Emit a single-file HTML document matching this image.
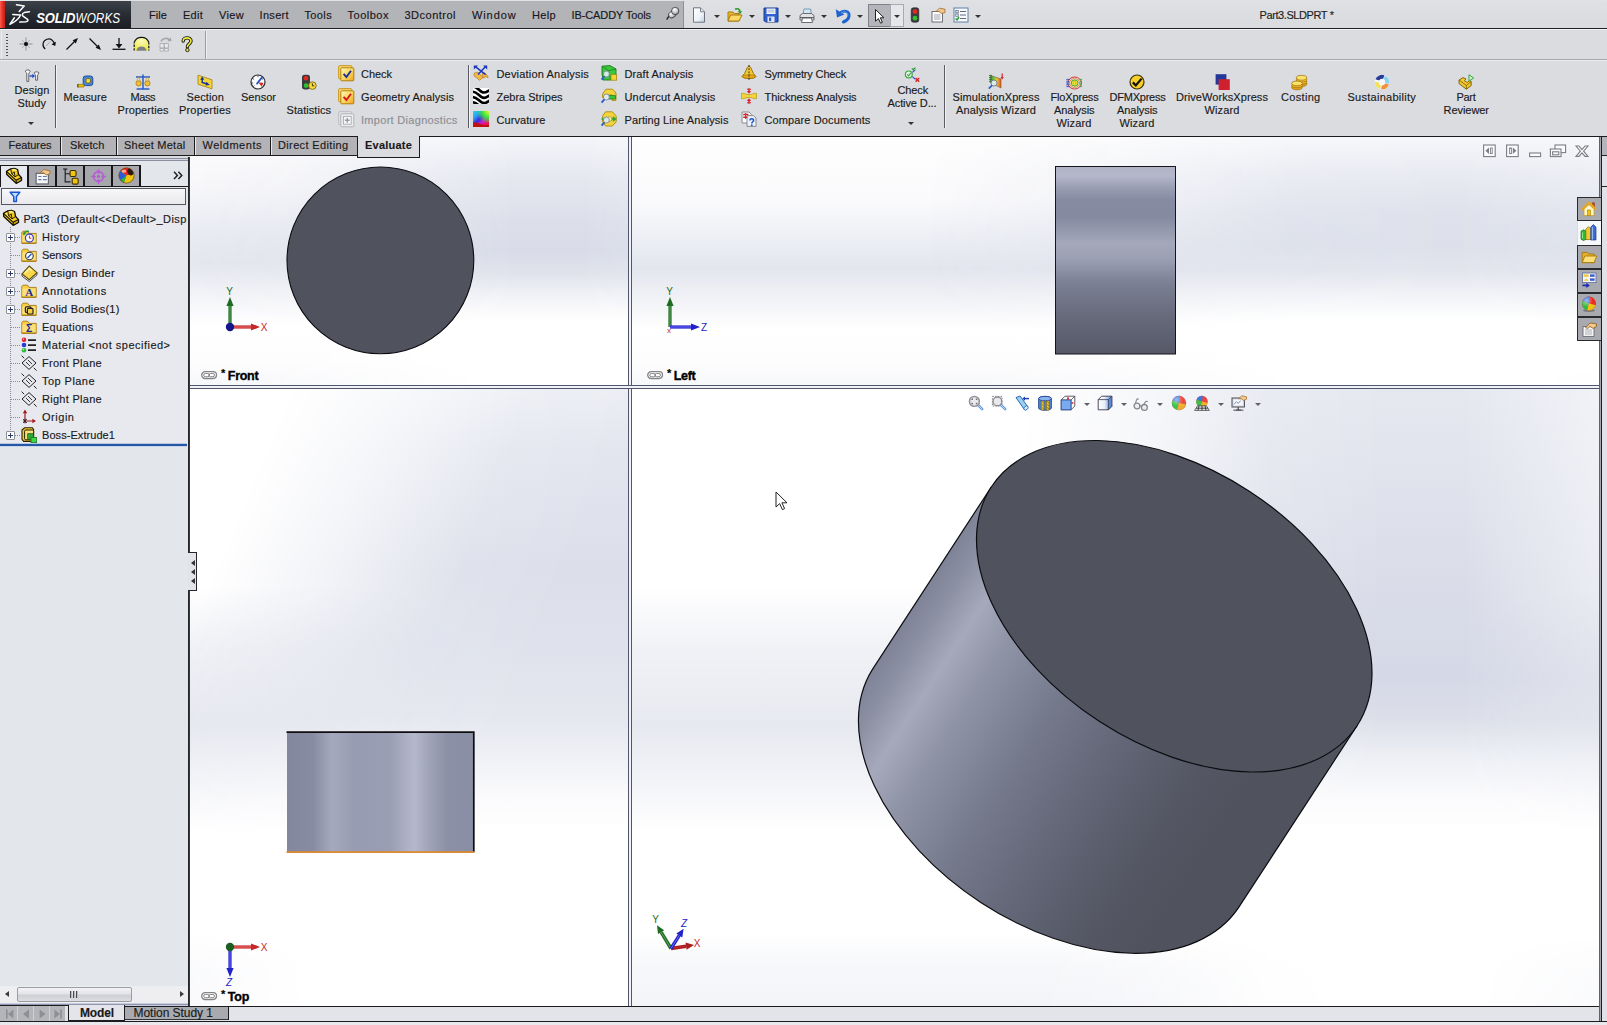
<!DOCTYPE html>
<html lang="en"><head><meta charset="utf-8"><title>Part3.SLDPRT - SolidWorks</title>
<style>
html,body{margin:0;padding:0;}
body{width:1607px;height:1025px;overflow:hidden;background:#dadcdf;font-family:"Liberation Sans",sans-serif;font-size:11px;color:#1a1a1a;}
#app{position:relative;width:1607px;height:1025px;overflow:hidden;}
#app div,#app span,#app svg{position:absolute;}
.t{white-space:pre;line-height:16px;height:16px;-webkit-text-stroke:.15px currentColor;}
svg{overflow:visible;}
.tsep{top:137px;width:1px;height:18px;background:#1c1c1e;box-shadow:1px 0 0 #e9e9ec;}
.fmt{top:166px;width:26px;height:20px;background:#a6a7ad;}
.tp{left:1577px;width:24px;height:24px;box-sizing:border-box;background:#a9aaaf;border:1px solid #2a2a2e;border-right:0;}
.tp.on{background:#f7f8fa;border-color:#f7f8fa;border-left-color:#d9dbe1;}
.harr{left:191px;width:0;height:0;border:3px solid transparent;border-right:4px solid #333;border-left:0;}

</style></head>
<body>
<div id="app">

<div id="gfx" style="left:190px;top:137px;width:1409px;height:869px;background:#fff"></div>
<!-- viewport backgrounds -->
<div id="vp1" style="left:190px;top:137px;width:438px;height:248px;background:linear-gradient(180deg,#fdfdfe 0%,#f7f7fa 20%,#e9ebf2 40%,#e5e7ef 51%,#f2f3f7 63%,#ffffff 76%,#fdfdfe 90%,#f7f8fa 100%)"></div>
<div style="left:190px;top:137px;width:438px;height:248px;background:linear-gradient(180deg,#f4f5f9 0%,#e6e8f0 16%,#dcdfea 34%,#d9dce8 46%,#e0e3ec 55%,#f1f2f6 64%,#ffffff 74%,#ffffff 100%);-webkit-mask-image:linear-gradient(90deg,rgba(0,0,0,0) 0%,rgba(0,0,0,.15) 22%,rgba(0,0,0,.7) 52%,#000 74%,#000 90%,rgba(0,0,0,.85) 100%);mask-image:linear-gradient(90deg,rgba(0,0,0,0) 0%,rgba(0,0,0,.15) 22%,rgba(0,0,0,.7) 52%,#000 74%,#000 90%,rgba(0,0,0,.85) 100%)"></div>
<div id="vp2" style="left:632px;top:137px;width:967px;height:248px;background:linear-gradient(180deg,#fefefe 0%,#fafafc 26%,#eceef4 42%,#e4e6ef 53%,#f1f2f6 65%,#ffffff 78%,#fdfdfe 90%,#f7f8fa 100%)"></div>
<div style="left:632px;top:137px;width:967px;height:248px;background:linear-gradient(180deg,#f6f7fa 0%,#e9ebf2 14%,#dfe2ec 30%,#dde0ea 44%,#e3e5ee 54%,#f2f3f7 64%,#ffffff 74%,#ffffff 100%);-webkit-mask-image:linear-gradient(90deg,rgba(0,0,0,0) 0%,rgba(0,0,0,0) 30%,rgba(0,0,0,.35) 50%,rgba(0,0,0,.9) 68%,#000 85%,rgba(0,0,0,.8) 100%);mask-image:linear-gradient(90deg,rgba(0,0,0,0) 0%,rgba(0,0,0,0) 30%,rgba(0,0,0,.35) 50%,rgba(0,0,0,.9) 68%,#000 85%,rgba(0,0,0,.8) 100%)"></div>
<div id="vp3" style="left:190px;top:389px;width:438px;height:617px;background:linear-gradient(180deg,#ffffff 0%,#ffffff 32%,#f1f2f6 42%,#e7e9f0 54.500%,#f2f3f7 63%,#ffffff 72%,#ffffff 88%,#f6f7fa 94%,#f3f4f8 100%)"></div>
<div style="left:190px;top:389px;width:438px;height:617px;background:linear-gradient(180deg,#eceef4 0%,#e3e6ef 10%,#dcdfea 29%,#dfe2ec 42%,#e5e7ef 53%,#f0f1f6 60%,#fbfbfd 66.500%,#ffffff 72%,#ffffff 100%);-webkit-mask-image:linear-gradient(112deg,rgba(0,0,0,0) 0%,rgba(0,0,0,0) 14%,rgba(0,0,0,.35) 30%,rgba(0,0,0,.9) 50%,#000 66%,#000 100%);mask-image:linear-gradient(112deg,rgba(0,0,0,0) 0%,rgba(0,0,0,0) 14%,rgba(0,0,0,.35) 30%,rgba(0,0,0,.9) 50%,#000 66%,#000 100%)"></div>
<div id="vp4" style="left:632px;top:389px;width:967px;height:617px;background:linear-gradient(180deg,#ffffff 0%,#ffffff 32%,#f1f2f6 42%,#e7e9f0 54.500%,#f2f3f7 63%,#ffffff 72%,#ffffff 88%,#f6f7fa 94%,#f3f4f8 100%)"></div>
<div style="left:632px;top:389px;width:967px;height:617px;background:linear-gradient(180deg,#e6e8f0 0%,#dfe2ec 18%,#d9dce8 34%,#d5d8e6 47%,#dcdfe9 53.500%,#eef0f5 60%,#fbfbfd 66.500%,#ffffff 72%,#ffffff 100%);-webkit-mask-image:linear-gradient(90deg,rgba(0,0,0,0) 0%,rgba(0,0,0,0) 40%,rgba(0,0,0,.35) 54%,rgba(0,0,0,.85) 66%,#000 78%,#000 86%,rgba(0,0,0,.55) 100%);mask-image:linear-gradient(90deg,rgba(0,0,0,0) 0%,rgba(0,0,0,0) 40%,rgba(0,0,0,.35) 54%,rgba(0,0,0,.85) 66%,#000 78%,#000 86%,rgba(0,0,0,.55) 100%)"></div>
<!-- splitters -->
<div style="left:628px;top:137px;width:4px;height:869px;background:linear-gradient(90deg,#50566c 0 25%,#f1f2f8 25% 75%,#50566c 75%)"></div>
<div style="left:190px;top:385px;width:1409px;height:4px;background:linear-gradient(180deg,#50566c 0 25%,#f1f2f8 25% 75%,#50566c 75%)"></div>
<div style="left:629px;top:386px;width:2px;height:2px;background:#f1f2f8"></div>

<svg id="model" width="1607" height="1025" viewBox="0 0 1607 1025" style="left:0;top:0">
<defs>
<linearGradient id="gIso" gradientUnits="userSpaceOnUse" x1="872.3" y1="669.7" x2="1238.2" y2="908.2">
<stop offset="0" stop-color="#7f8397"/><stop offset=".055" stop-color="#8c90a3"/><stop offset=".13" stop-color="#a5a9bb"/>
<stop offset=".22" stop-color="#9094a7"/><stop offset=".40" stop-color="#74788b"/><stop offset=".53" stop-color="#676a7b"/>
<stop offset=".645" stop-color="#5c5f6e"/><stop offset=".757" stop-color="#545663"/><stop offset=".87" stop-color="#50525e"/><stop offset="1" stop-color="#50525e"/>
</linearGradient>
<linearGradient id="gLeft" x1="0" y1="0" x2="0" y2="1">
<stop offset="0" stop-color="#aeb2c4"/><stop offset=".05" stop-color="#b4b8ca"/><stop offset=".11" stop-color="#9a9fb4"/><stop offset=".18" stop-color="#868ba2"/>
<stop offset=".27" stop-color="#848aa0"/><stop offset=".41" stop-color="#a4a8ba"/><stop offset=".50" stop-color="#9a9eb1"/><stop offset=".62" stop-color="#7c8094"/>
<stop offset=".80" stop-color="#666a7b"/><stop offset="1" stop-color="#565868"/>
</linearGradient>
<linearGradient id="gTop" x1="0" y1="0" x2="1" y2="0">
<stop offset="0" stop-color="#82879d"/><stop offset=".14" stop-color="#878ca2"/><stop offset=".24" stop-color="#a4a9be"/><stop offset=".36" stop-color="#979cb2"/>
<stop offset=".55" stop-color="#999eb4"/><stop offset=".68" stop-color="#b4b8ca"/><stop offset=".78" stop-color="#9a9fb4"/><stop offset=".86" stop-color="#8b90a6"/><stop offset="1" stop-color="#898ea4"/>
</linearGradient>
</defs>
<!-- front view -->
<circle cx="380.4" cy="260.4" r="93.4" fill="#50525e" stroke="#0c0c10" stroke-width="1.1"/>
<!-- left view -->
<rect x="1055.5" y="166.5" width="120" height="187.5" fill="url(#gLeft)" stroke="#15151a" stroke-width="1"/>
<!-- top view -->
<rect x="287" y="732" width="187" height="120" fill="url(#gTop)"/>
<path d="M286.500 732.200H473.800V852" fill="none" stroke="#0e0e12" stroke-width="1.700"/>
<path d="M286.500 852.200H474.500" fill="none" stroke="#e08a30" stroke-width="1.800"/>
<!-- iso view -->
<path d="M991.3 487.0 L872.3 669.7 A218.4 137.4 33.1 0 0 1238.2 908.2 L1357.2 725.5 Z" fill="url(#gIso)" stroke="#0c0c10" stroke-width="1.2" stroke-linejoin="round"/>
<ellipse cx="1174.25" cy="606.25" rx="218.4" ry="137.4" transform="rotate(33.1 1174.25 606.25)" fill="#50525e" stroke="#0c0c10" stroke-width="1.2"/>
</svg>
<svg id="triads" width="1607" height="1025" viewBox="0 0 1607 1025" style="left:0;top:0"><line x1="230.0" y1="327.0" x2="230.0" y2="306.0" stroke="#1f6b22" stroke-width="3.2"/><line x1="230.0" y1="327.0" x2="230.0" y2="306.0" stroke="#5aa85c" stroke-width="1"/><polygon points="230.0,297.0 233.6,306.0 226.4,306.0" fill="#1f6b22"/><line x1="230.0" y1="327.0" x2="251.0" y2="327.0" stroke="#c62828" stroke-width="3.2"/><line x1="230.0" y1="327.0" x2="251.0" y2="327.0" stroke="#ef7070" stroke-width="1"/><polygon points="260.0,327.0 251.0,330.6 251.0,323.4" fill="#c62828"/><circle cx="230" cy="327" r="4.2" fill="#15158c"/><text x="229.5" y="294.5" fill="#1f6b22" font-size="10" text-anchor="middle" font-family="Liberation Sans,sans-serif">Y</text><text x="264.0" y="330.5" fill="#c62828" font-size="10" text-anchor="middle" font-family="Liberation Sans,sans-serif">X</text><text x="669.0" y="332.5" fill="#c62828" font-size="8" text-anchor="middle" font-family="Liberation Sans,sans-serif">x</text><line x1="670.0" y1="327.0" x2="670.0" y2="306.0" stroke="#1f6b22" stroke-width="3.2"/><line x1="670.0" y1="327.0" x2="670.0" y2="306.0" stroke="#5aa85c" stroke-width="1"/><polygon points="670.0,297.0 673.6,306.0 666.4,306.0" fill="#1f6b22"/><line x1="670.0" y1="327.0" x2="691.0" y2="327.0" stroke="#2222c8" stroke-width="3.2"/><line x1="670.0" y1="327.0" x2="691.0" y2="327.0" stroke="#6a6aff" stroke-width="1"/><polygon points="700.0,327.0 691.0,330.6 691.0,323.4" fill="#2222c8"/><text x="669.5" y="294.5" fill="#1f6b22" font-size="10" text-anchor="middle" font-family="Liberation Sans,sans-serif">Y</text><text x="704.0" y="330.5" fill="#2222c8" font-size="10" text-anchor="middle" font-family="Liberation Sans,sans-serif">Z</text><line x1="230.0" y1="947.0" x2="251.0" y2="947.0" stroke="#c62828" stroke-width="3.2"/><line x1="230.0" y1="947.0" x2="251.0" y2="947.0" stroke="#ef7070" stroke-width="1"/><polygon points="260.0,947.0 251.0,950.6 251.0,943.4" fill="#c62828"/><line x1="230.0" y1="947.0" x2="230.0" y2="968.0" stroke="#2222c8" stroke-width="3.2"/><line x1="230.0" y1="947.0" x2="230.0" y2="968.0" stroke="#6a6aff" stroke-width="1"/><polygon points="230.0,977.0 226.4,968.0 233.6,968.0" fill="#2222c8"/><circle cx="230" cy="947" r="4.2" fill="#1c5e1f"/><text x="264.0" y="950.5" fill="#c62828" font-size="10" text-anchor="middle" font-family="Liberation Sans,sans-serif">X</text><text font-style="italic" x="229.0" y="985.5" fill="#2222c8" font-size="10" text-anchor="middle" font-family="Liberation Sans,sans-serif">Z</text><line x1="671.0" y1="948.5" x2="686.1" y2="946.2" stroke="#a81f1f" stroke-width="3.4"/><line x1="671.0" y1="948.5" x2="686.1" y2="946.2" stroke="#c62828" stroke-width="1"/><polygon points="694.0,945.0 686.6,949.8 685.5,942.6" fill="#a81f1f"/><line x1="671.0" y1="948.5" x2="661.1" y2="932.1" stroke="#1f6b22" stroke-width="3.4"/><line x1="671.0" y1="948.5" x2="661.1" y2="932.1" stroke="#5aa85c" stroke-width="1"/><polygon points="657.0,925.2 664.2,930.2 658.0,933.9" fill="#1f6b22"/><line x1="671.0" y1="948.5" x2="679.3" y2="935.4" stroke="#2222c8" stroke-width="3.4"/><line x1="671.0" y1="948.5" x2="679.3" y2="935.4" stroke="#6a6aff" stroke-width="1"/><polygon points="683.6,928.7 682.3,937.4 676.3,933.5" fill="#2222c8"/><text x="655.5" y="922.5" fill="#1f6b22" font-size="10" text-anchor="middle" font-family="Liberation Sans,sans-serif">Y</text><text font-style="italic" x="684.0" y="926.5" fill="#2222c8" font-size="10" text-anchor="middle" font-family="Liberation Sans,sans-serif">Z</text><text x="697.0" y="947.0" fill="#c62828" font-size="10" text-anchor="middle" font-family="Liberation Sans,sans-serif">X</text></svg><svg width="17" height="9" viewBox="0 0 17 9" style="left:200.7px;top:370.7px"><rect x=".7" y=".7" width="14.800" height="6.800" rx="3.400" fill="#fff" stroke="#858585" stroke-width="1.300"/><rect x="2.700" y="2.500" width="5.600" height="3.200" rx="1.600" fill="none" stroke="#777" stroke-width=".9"/><rect x="7.900" y="2.500" width="5.600" height="3.200" rx="1.600" fill="none" stroke="#777" stroke-width=".9"/></svg><svg width="17" height="9" viewBox="0 0 17 9" style="left:646.7px;top:370.7px"><rect x=".7" y=".7" width="14.800" height="6.800" rx="3.400" fill="#fff" stroke="#858585" stroke-width="1.300"/><rect x="2.700" y="2.500" width="5.600" height="3.200" rx="1.600" fill="none" stroke="#777" stroke-width=".9"/><rect x="7.900" y="2.500" width="5.600" height="3.200" rx="1.600" fill="none" stroke="#777" stroke-width=".9"/></svg><svg width="17" height="9" viewBox="0 0 17 9" style="left:200.7px;top:991.7px"><rect x=".7" y=".7" width="14.800" height="6.800" rx="3.400" fill="#fff" stroke="#858585" stroke-width="1.300"/><rect x="2.700" y="2.500" width="5.600" height="3.200" rx="1.600" fill="none" stroke="#777" stroke-width=".9"/><rect x="7.900" y="2.500" width="5.600" height="3.200" rx="1.600" fill="none" stroke="#777" stroke-width=".9"/></svg><svg width="14" height="20" viewBox="0 0 14 20" style="left:775px;top:491px"><path d="M1 1V16L4.6 12.6L7.4 18.6L9.6 17.6L6.9 11.8H12Z" fill="#fff" stroke="#222" stroke-width="1"/></svg>
<!-- ===== title / menu bar ===== -->
<div style="left:0;top:0;width:1607px;height:1px;background:#e2e2e5"></div>
<div style="left:131px;top:1px;width:553px;height:27px;background:#b3b4b7"></div>
<div style="left:0;top:1px;width:131px;height:27px;background:linear-gradient(#3d424a,#2a2e35 45%,#1b1e24)"></div>
<div style="left:0;top:1px;width:5px;height:27px;background:linear-gradient(90deg,#f9604f,#e2281f 60%,#c8221a)"></div>
<div style="left:683px;top:1px;width:1px;height:27px;background:#8f9094"></div>
<div style="left:684px;top:1px;width:923px;height:27px;background:linear-gradient(#dee0e3,#d9dbde)"></div>
<div style="left:0;top:28px;width:1607px;height:1px;background:#202022"></div>
<div style="left:0;top:29px;width:1607px;height:1px;background:#f2f2f5"></div>
<!-- ===== small toolbar row ===== -->
<div style="left:206px;top:31px;width:1px;height:28px;background:#f0f0f2"></div>
<div style="left:205px;top:31px;width:1px;height:28px;background:#9a9ca2"></div>
<div style="left:1px;top:31px;width:1px;height:28px;background:#eceded"></div>
<div style="left:0;top:59px;width:1607px;height:1px;background:#a6a8ad"></div>
<div style="left:0;top:60px;width:1607px;height:1px;background:#eceded"></div>
<!-- ribbon separators -->
<div style="left:55px;top:65px;width:1px;height:63px;background:#5a5b60"></div>
<div style="left:56px;top:65px;width:1px;height:63px;background:#f2f2f5"></div>
<div style="left:468px;top:65px;width:1px;height:63px;background:#5a5b60"></div>
<div style="left:469px;top:65px;width:1px;height:63px;background:#f2f2f5"></div>
<div style="left:944px;top:65px;width:1px;height:63px;background:#5a5b60"></div>
<div style="left:945px;top:65px;width:1px;height:63px;background:#f2f2f5"></div>
<div style="left:0;top:136px;width:1607px;height:1px;background:#1c1c1e"></div>
<!-- ===== command manager tabs ===== -->
<div id="cmtabs" style="left:0;top:137px;width:357px;height:18px;background:#b2b2b7"></div>
<div style="left:0;top:155px;width:357px;height:1px;background:#1c1c1e"></div>
<div class="tsep" style="left:60px"></div><div class="tsep" style="left:116px"></div><div class="tsep" style="left:194px"></div><div class="tsep" style="left:270px"></div>
<div style="left:357px;top:136px;width:63px;height:22px;background:#dadcdf;border:1px solid #1c1c1e;border-top:0;box-sizing:border-box"></div>
<!-- ===== left panel ===== -->
<div style="left:0;top:156px;width:188px;height:850px;background:#e3e6eb"></div>
<div style="left:0;top:206px;width:188px;height:238px;background:#e7e9ef"></div>
<div style="left:0;top:156px;width:188px;height:2px;background:#dadcdf"></div>
<div style="left:0;top:158px;width:188px;height:1px;background:#8a8ea0"></div>
<div style="left:0;top:159px;width:188px;height:1px;background:#d6d9e2"></div>
<div style="left:0;top:160px;width:188px;height:1px;background:#8a8ea0"></div>
<div style="left:188px;top:157px;width:2px;height:849px;background:linear-gradient(90deg,#26272b 70%,#8a8c92)"></div>
<!-- fm tabs -->
<div style="left:0;top:165px;width:141px;height:22px;background:#17171a"></div>
<div style="left:29px;top:186px;width:159px;height:1px;background:#17171a"></div>
<div style="left:1px;top:166px;width:26px;height:21px;background:#e7e9ef"></div>
<div class="fmt" style="left:29px"></div><div class="fmt" style="left:57px"></div><div class="fmt" style="left:85px"></div><div class="fmt" style="left:113px"></div>
<!-- filter box -->
<div style="left:1px;top:188px;width:185px;height:17px;background:linear-gradient(#f7f7f9,#e9e9ed);border:1px solid #55575e;box-sizing:border-box"></div>
<!-- selection rollback bar -->
<div style="left:0;top:444px;width:187px;height:2px;background:#2458a4;box-shadow:0 -1px 0 #b9c8e4,0 1px 0 #c9d4ea"></div>
<!-- scrollbar -->
<div style="left:0;top:986px;width:188px;height:17px;background:#eeeef1"></div>
<div style="left:17px;top:987px;width:115px;height:15px;box-sizing:border-box;border:1px solid #9b9da3;border-radius:2px;background:linear-gradient(#f4f4f6,#e3e4e8 45%,#cfd0d5 55%,#dcdde1)"></div>
<div style="left:70px;top:991px;width:1px;height:7px;background:#4a4a4e;box-shadow:3px 0 0 #4a4a4e,6px 0 0 #4a4a4e,1px 0 0 #b9babf,4px 0 0 #b9babf,7px 0 0 #b9babf"></div>
<div style="left:5px;top:991px;width:0;height:0;border:3px solid transparent;border-right:4px solid #3a3a3e;border-left:0"></div>
<div style="left:180px;top:991px;width:0;height:0;border:3px solid transparent;border-left:4px solid #3a3a3e;border-right:0"></div>
<div style="left:0;top:1003px;width:188px;height:1px;background:#c9cddc"></div>
<div style="left:0;top:1004px;width:188px;height:1px;background:#8f94b2"></div>
<div style="left:0;top:1005px;width:188px;height:1px;background:#c9cddc"></div>
<!-- ===== bottom tab strip ===== -->
<div style="left:0;top:1006px;width:1599px;height:1px;background:#1c1c1e"></div>
<div style="left:0;top:1007px;width:1599px;height:14px;background:#e2e4ea"></div>
<div style="left:0;top:1021px;width:1607px;height:1px;background:#1c1c1e"></div>
<div style="left:0;top:1022px;width:1607px;height:3px;background:#e9e9ed"></div>
<div style="left:0;top:1005px;width:69px;height:1px;background:#1c1c1e"></div>
<div style="left:0;top:1006px;width:68px;height:15px;background:#b4b5b9"></div>
<div style="left:65px;top:1006px;width:3px;height:15px;background:#e2e3e6"></div>
<div style="left:68px;top:1005px;width:57px;height:17px;background:#1c1c1e"></div>
<div style="left:69px;top:1005px;width:55px;height:15px;background:#e3e5ea"></div>
<div style="left:125px;top:1007px;width:103px;height:12px;background:#a9aaaf"></div>
<div style="left:125px;top:1019px;width:104px;height:1px;background:#333336"></div>
<div style="left:228px;top:1006px;width:1px;height:14px;background:#1c1c1e"></div>
<!-- ===== right edge ===== -->
<div style="left:1599px;top:137px;width:1px;height:884px;background:#5c6272"></div>
<div style="left:1600px;top:137px;width:1px;height:884px;background:#a3a6ae"></div>
<div style="left:1601px;top:137px;width:1px;height:885px;background:#1c1c1e"></div>
<div style="left:1602px;top:137px;width:5px;height:884px;background:#e1e2e7"></div>
<div style="left:1602px;top:137px;width:5px;height:18px;background:#b4b5ba"></div>
<div style="left:1602px;top:155px;width:5px;height:1px;background:#222"></div>
<div style="left:1602px;top:186px;width:5px;height:1px;background:#222"></div>
<!-- task pane tabs -->
<div class="tp" style="top:197px"></div>
<div class="tp on" style="top:221px"></div>
<div class="tp" style="top:245px"></div>
<div class="tp" style="top:269px"></div>
<div class="tp" style="top:293px"></div>
<div class="tp" style="top:317px"></div>
<!-- panel collapse handle -->
<div style="left:188px;top:552px;width:9px;height:39px;box-sizing:border-box;background:#e3e4e9;border:1px solid #26272b;border-left:0"></div>
<div class="harr" style="top:560px"></div><div class="harr" style="top:569px"></div><div class="harr" style="top:578px"></div>

<svg width="126" height="27" viewBox="0 0 126 27" style="left:5px;top:1px">
<g fill="none" stroke="#fff" stroke-width="1.500" stroke-linecap="round" stroke-linejoin="round">
<path d="M11.500 3.800L19.200 4.900L14.200 10.400"/>
<path d="M7.800 13.500L15.600 13.900C14.600 17.400 9.200 21.600 4.900 23.200L9.400 16.800"/>
<path d="M24.400 10.700L19.200 11.600C16.800 12.400 17.200 14.600 18 15.200L22.600 18.300C23.600 19.300 22.600 20.500 21 20.700L14.800 21.100"/>
</g>
<text x="31.3" y="21.8" fill="#fff" font-family="Liberation Sans,sans-serif" font-size="15.5" font-style="italic" font-weight="bold" letter-spacing="-.2" textLength="39" lengthAdjust="spacingAndGlyphs">SOLID</text>
<text x="70.6" y="21.8" fill="#fff" font-family="Liberation Sans,sans-serif" font-size="15.5" font-style="italic" textLength="44.5" lengthAdjust="spacingAndGlyphs">WORKS</text>
</svg>
<svg width="16" height="16" viewBox="0 0 16 16" style="left:664.5px;top:6px"><defs><radialGradient id="gpin" cx=".4" cy=".3" r=".8"><stop offset="0" stop-color="#fff"/><stop offset=".55" stop-color="#c9c9cd"/><stop offset="1" stop-color="#6a6b70"/></radialGradient></defs><path d="M5 8.400L2 13.200" stroke="#2c2c30" stroke-width="1.500" stroke-linecap="round"/><ellipse cx="7.200" cy="8.600" rx="3.800" ry="3.200" fill="url(#gpin)" stroke="#3a3b40" stroke-width=".8" transform="rotate(-30 7.200 8.600)"/><circle cx="10.200" cy="5" r="3.700" fill="url(#gpin)" stroke="#3a3b40" stroke-width=".8"/></svg>
<svg width="16" height="16" viewBox="0 0 16 16" style="left:691px;top:7px"><defs><linearGradient id="gnew" x1="0" y1="0" x2="1" y2="1"><stop offset="0" stop-color="#fff"/><stop offset=".6" stop-color="#eef3f8"/><stop offset="1" stop-color="#bcd0e2"/></linearGradient></defs><path d="M2.5 .8H9.5L13.5 4.8V15.2H2.5Z" fill="url(#gnew)" stroke="#6d7480"/><path d="M9.5 .8V4.8H13.5" fill="#dfe3ea" stroke="#7d8088"/></svg>
<div style="left:713.5px;top:14.5px;width:0;height:0;border:3px solid transparent;border-top:3px solid #333;border-bottom:0"></div>
<svg width="16" height="16" viewBox="0 0 16 16" style="left:727px;top:7px"><path d="M1 5H6L7.5 6.5H12V14H1Z" fill="#e9b630" stroke="#a87a10"/><path d="M1 14L3.6 8H15L12 14Z" fill="#fbd964" stroke="#a87a10"/><path d="M8 2.2C10.5 1 12.8 2 13 4.6" fill="none" stroke="#2c9a2c" stroke-width="1.6"/><path d="M10.8 4.2H15.2L13 7.2Z" fill="#2c9a2c"/></svg>
<div style="left:749px;top:14.5px;width:0;height:0;border:3px solid transparent;border-top:3px solid #333;border-bottom:0"></div>
<svg width="16" height="16" viewBox="0 0 16 16" style="left:763px;top:7px"><path d="M1 1H15V15H2.5L1 13.5Z" fill="#2f5fd0" stroke="#1a3a8c"/><rect x="3.5" y="1.5" width="9" height="5.5" fill="#f4f6fb"/><rect x="4.5" y="9.5" width="7" height="5.5" fill="#dfe4ee"/><rect x="6" y="10.5" width="2.2" height="3.6" fill="#2f5fd0"/><path d="M4.5 3.2H11.5M4.5 5H11.5" stroke="#9aa6c4" stroke-width=".8"/></svg>
<div style="left:785px;top:14.5px;width:0;height:0;border:3px solid transparent;border-top:3px solid #333;border-bottom:0"></div>
<svg width="16" height="16" viewBox="0 0 16 16" style="left:798.5px;top:7.5px"><path d="M5 1H11.5L12.5 6.5H4Z" fill="#cfe6f7" stroke="#7d98b0"/><path d="M1 7.5L3.5 5.5H12.5L15 7.5V12H1Z" fill="#e2e3e7" stroke="#6a6c72"/><path d="M3.5 10H12.5L13.5 14.5H2.5Z" fill="#fdfdfd" stroke="#6a6c72"/><path d="M1 9.6H15" stroke="#55575c"/></svg>
<div style="left:821px;top:14.5px;width:0;height:0;border:3px solid transparent;border-top:3px solid #333;border-bottom:0"></div>
<svg width="16" height="16" viewBox="0 0 16 16" style="left:835px;top:7px"><path d="M4.600 6.800C8.200 2.400 14.600 4 14 9C13.600 12.200 11 14 8.400 15" fill="none" stroke="#1f63cf" stroke-width="3" stroke-linecap="round"/><path d="M.8 2.200L2 10.600L9.400 7.600Z" fill="#1f63cf"/><path d="M6 6.200C9 3.600 13 4.800 12.800 8.600" fill="none" stroke="#6fa4ef" stroke-width="1"/></svg>
<div style="left:857px;top:14.5px;width:0;height:0;border:3px solid transparent;border-top:3px solid #333;border-bottom:0"></div>
<div style="left:868px;top:4px;width:23px;height:23px;box-sizing:border-box;background:#b4b5ba;border:1px solid #808186"></div>
<div style="left:890px;top:4px;width:14px;height:23px;box-sizing:border-box;background:#e6e7eb;border:1px solid #a9aaaf"></div>
<svg width="16" height="16" viewBox="0 0 16 16" style="left:871px;top:7.5px"><path d="M4.5 1.5V13.2L7.4 10.6L9.6 15.2L11.4 14.3L9.3 9.8H13Z" fill="#fff" stroke="#222" stroke-width="1"/></svg>
<div style="left:894px;top:14.5px;width:0;height:0;border:3px solid transparent;border-top:3px solid #333;border-bottom:0"></div>
<svg width="16" height="16" viewBox="0 0 16 16" style="left:906.5px;top:7px"><rect x="4.2" y=".8" width="7.6" height="14.4" rx="2.2" fill="#3a3b3f" stroke="#222" stroke-width=".6"/><circle cx="8" cy="4.6" r="2.4" fill="#e8281e"/><circle cx="8" cy="11.2" r="2.4" fill="#2fbf2f"/></svg>
<svg width="16" height="16" viewBox="0 0 16 16" style="left:930px;top:7px"><rect x="2" y="4.5" width="10.5" height="10.5" fill="#fbfbfc" stroke="#6d6f76"/><path d="M4 8H10.5M4 10H10.5M4 12H10.5" stroke="#9b9da4" stroke-width=".9"/><path d="M6 4.5L9.5 1.2L15 2.2V5.5L11.5 6.5L9 4.5Z" fill="#f2c58c" stroke="#9a6a2c" stroke-width=".8"/></svg>
<svg width="16" height="16" viewBox="0 0 16 16" style="left:952.5px;top:7px"><rect x="1" y="1" width="14" height="14" fill="#f7f9fc" stroke="#5f7fa8"/><path d="M7 4.5H13M7 8H13M7 11.5H13" stroke="#5f6b80" stroke-width="1"/><rect x="2.8" y="3.4" width="2.4" height="2.4" fill="none" stroke="#5f6b80" stroke-width=".8"/><rect x="2.8" y="6.9" width="2.4" height="2.4" fill="none" stroke="#5f6b80" stroke-width=".8"/><path d="M2.6 11.4L4 12.9L6 10" fill="none" stroke="#1f9a2a" stroke-width="1.4"/></svg>
<div style="left:975px;top:14.5px;width:0;height:0;border:3px solid transparent;border-top:3px solid #333;border-bottom:0"></div>
<div style="left:6px;top:34px;width:2px;height:23px;background:repeating-linear-gradient(180deg,#4c4d52 0 1px,rgba(0,0,0,0) 1px 3px)"></div>
<svg width="16" height="16" viewBox="0 0 16 16" style="left:17.5px;top:35.5px"><path d="M8 1.500V14.500M1.500 8H14.500" stroke="#8a8b91" stroke-width=".9"/><path d="M4 4L12 12M12 4L4 12" stroke="#a5a6ab" stroke-width=".8"/><circle cx="8" cy="8" r="2" fill="#0c0c0e"/></svg>
<svg width="16" height="16" viewBox="0 0 16 16" style="left:40.5px;top:35.5px"><path d="M4.2 13C.6 10 1.6 4.6 6 3.2C9.8 2 12.8 4.6 13.6 8.6" fill="none" stroke="#111" stroke-width="1.2"/><path d="M10.4 8.2L14.2 10L15 5.8Z" fill="#111"/><path d="M5 10L9.6 5.2" stroke="#9a9ba0" stroke-width=".8"/></svg>
<svg width="16" height="16" viewBox="0 0 16 16" style="left:63.5px;top:35.5px"><path d="M2.5 13.5L12 4" stroke="#111" stroke-width="1.3"/><path d="M14 2L8.6 4.2L11.8 7.4Z" fill="#111"/></svg>
<svg width="16" height="16" viewBox="0 0 16 16" style="left:87px;top:35.5px"><path d="M2.5 2.5L12 12" stroke="#111" stroke-width="1.3"/><path d="M14 14L8.6 11.8L11.8 8.6Z" fill="#111"/></svg>
<svg width="16" height="16" viewBox="0 0 16 16" style="left:110.5px;top:35.5px"><path d="M8 2V10" stroke="#111" stroke-width="1.3"/><path d="M4.6 8L8 12.6L11.4 8Z" fill="#111"/><path d="M1.5 13.3H14.5" stroke="#111" stroke-width="1.3"/></svg>
<svg width="17" height="16" viewBox="0 0 17 16" style="left:132.5px;top:36px"><defs><radialGradient id="gdm" cx=".5" cy=".25" r=".7"><stop offset="0" stop-color="#fbfbc0"/><stop offset="1" stop-color="#eeea48"/></radialGradient></defs><path d="M1.200 14.600V6.200C2.400 3.400 5.600 1.400 8.500 1.400S14.600 3.400 15.800 6.200V14.600Z" fill="url(#gdm)"/><path d="M1.200 14.600V6.200M15.800 6.200V14.600" fill="none" stroke="#111" stroke-width="1.200" stroke-dasharray="2.400 1.200"/><path d="M1.200 6.200C2.400 3.400 5.600 1.400 8.500 1.400S14.600 3.400 15.800 6.200" fill="none" stroke="#111" stroke-width="1.200"/><path d="M3.400 14.800C3.800 9 13.200 9 13.600 14.800Z" fill="#7e8086"/></svg>
<svg width="16" height="16" viewBox="0 0 16 16" style="left:156.5px;top:35.5px"><path d="M3 7.5H7V12H3ZM7.4 7.5H11.4V12H7.4ZM3 12.4H7V15H3ZM7.4 12.4H11.4V15H7.4Z" fill="#e9eaed" stroke="#a5a6ab" stroke-width=".8"/><path d="M4 5.4C5.4 2 10.4 1.4 12.6 4" fill="none" stroke="#a5a6ab" stroke-width="1.6"/><path d="M10.4 5.4L14.6 5L13.6 1.2Z" fill="#a5a6ab"/></svg>
<svg width="16" height="16" viewBox="0 0 16 16" style="left:179px;top:35.5px"><path d="M4.2 5C4.2 .8 12 .8 12 5C12 7.8 8.6 7.8 8.4 10.6" fill="none" stroke="#111" stroke-width="3.4" stroke-linecap="round"/><path d="M4.2 5C4.2 .8 12 .8 12 5C12 7.8 8.6 7.8 8.4 10.6" fill="none" stroke="#f4f03a" stroke-width="1.6" stroke-linecap="round"/><circle cx="8.4" cy="14" r="1.7" fill="#f4f03a" stroke="#111" stroke-width=".9"/></svg>
<svg width="17" height="14" viewBox="0 0 17 14" style="left:23.5px;top:68.5px"><g fill="#f2f3f6" stroke="#55575e" stroke-width=".9"><path d="M1.4 2.2C1.4 .4 6.2 .4 6.2 2.2C6.2 3.6 4.8 3.6 4.8 4.6V12.4H2.8V4.6C2.8 3.6 1.4 3.6 1.4 2.2Z"/><path d="M10 4C10 2.4 15 2.4 15 4C15 5.2 13.6 5.2 13.6 6.2V11.2H11.6V6.2C11.600 5.200 10 5.200 10 4Z"/></g><path d="M5.6 7H9.4" stroke="#1a49c8" stroke-width="1.4"/><path d="M8.4 4.8L11 7L8.400 9.200Z" fill="#1a49c8"/></svg>
<div style="left:28px;top:121.5px;width:0;height:0;border:3px solid transparent;border-top:3px solid #333;border-bottom:0"></div>
<svg width="17" height="13" viewBox="0 0 17 13" style="left:76.5px;top:75px"><rect x="6.200" y="1" width="9.6" height="9.6" rx="2.4" fill="#4a86d8" stroke="#1f4a98"/><rect x="9" y="3.600" width="4.4" height="4.4" rx="1" fill="#f1dc4a" stroke="#6a5a10" stroke-width=".8"/><path d="M.8 9.4H7V12H.8Z" fill="#f1c40f" stroke="#8a6a00" stroke-width=".7"/><path d="M.8 9V12.600" stroke="#6a5a10" stroke-width="1.2"/></svg>
<svg width="16" height="16" viewBox="0 0 16 16" style="left:134.7px;top:74px"><path d="M8 .6V14.6M1 3H15M1.6 15H14.400" stroke="#2a5cc8" stroke-width="1.5"/><circle cx="3.600" cy="9.400" r="2.600" fill="#f1c232" stroke="#a87a10" stroke-width=".8"/><circle cx="12.400" cy="9.400" r="2.600" fill="#f1c232" stroke="#a87a10" stroke-width=".8"/><path d="M3.600 3L1.600 7.200M3.600 3L5.600 7.200M12.400 3L10.400 7.200M12.400 3L14.400 7.200" stroke="#d89a1a" stroke-width=".7"/></svg>
<svg width="16" height="16" viewBox="0 0 16 16" style="left:196.5px;top:73.5px"><path d="M1 1.200L15 5.800V14.800L1 10.200Z" fill="#f4d43a" stroke="#a88a10" stroke-width=".9"/><path d="M5.200 5V8.400L10 10" fill="none" stroke="#16309a" stroke-width="1.400"/><path d="M5.200 2.400L3.200 5.800H7.200ZM12.800 10.900L9.400 7.800L8.600 11.600Z" fill="#16309a"/></svg>
<svg width="16" height="16" viewBox="0 0 16 16" style="left:249.5px;top:74px"><circle cx="8" cy="8" r="7" fill="#fdfdfe" stroke="#2a2b30" stroke-width="1.200"/><path d="M8.400 8.400L13.400 8.800L11.800 12.800Z" fill="#d8281e"/><path d="M7 9.600L12 3.400" stroke="#1f55c8" stroke-width="1.700" stroke-linecap="round"/><path d="M8 1.400V3.200M2.600 4.400L4 5.400M13.400 4.400L12.200 5.400M1.600 9H3.200M3.200 12.600L4.400 11.600" stroke="#333" stroke-width=".8"/></svg>
<svg width="16" height="16" viewBox="0 0 16 16" style="left:301px;top:74px"><rect x="1" y=".8" width="8" height="14.6" rx="2.600" fill="#3a3b3f"/><circle cx="5" cy="4.200" r="2.300" fill="#e8281e"/><circle cx="5" cy="11.600" r="2.300" fill="#2fbf2f"/><circle cx="11.400" cy="11.600" r="3.800" fill="#f6d83a" stroke="#7a6a10" stroke-width=".9"/><path d="M11.400 9.400V11.800H13.200" fill="none" stroke="#222" stroke-width=".9"/></svg>
<svg width="16" height="16" viewBox="0 0 16 16" style="left:904px;top:67px"><circle cx="4.800" cy="7.400" r="3.400" fill="#e8f6e8" stroke="#2faa3a" stroke-width="1.2"/><path d="M3.200 7.400L4.600 8.800L6.800 5.800" fill="none" stroke="#2faa3a" stroke-width="1.200"/><path d="M8.400 5.400L11.400 2.600M8.400 9.600L11.400 12.400" stroke="#2a4ac8" stroke-width="1.1"/><path d="M11 1L14.200 4.200M12.200 2.600L15.600 .2" fill="none" stroke="#1f9a2a" stroke-width="1.3" transform="translate(-1 .6) scale(.8)"/><path d="M11.600 11L15.200 14.800M15.200 11L11.600 14.800" stroke="#d8202a" stroke-width="1.4"/></svg>
<div style="left:908px;top:121.5px;width:0;height:0;border:3px solid transparent;border-top:3px solid #333;border-bottom:0"></div>
<svg width="17" height="17" viewBox="0 0 17 17" style="left:987.5px;top:73px"><defs><linearGradient id="gsx" x1="0" x2="1"><stop offset="0" stop-color="#2a8a3a"/><stop offset=".35" stop-color="#7fc83a"/><stop offset=".6" stop-color="#f1c232"/><stop offset="1" stop-color="#e8501e"/></linearGradient></defs><path d="M2.400 2.400L13 6V15L2.400 9.600Z" fill="url(#gsx)" stroke="#6a5a3a" stroke-width=".6"/><path d="M1 2.400H4M1 4.400H4M1 6.400H4M1 8.400H4" stroke="#1f7a2a" stroke-width=".9"/><path d="M14.200 .6V5.600" stroke="#d8202a" stroke-width="1.2"/><path d="M12.600 4L14.200 6.400L15.800 4Z" fill="#d8202a"/><circle cx="6" cy="10" r="3" fill="#eaf4fb" fill-opacity=".85" stroke="#6a7a90" stroke-width=".9"/><path d="M4 12.400L.8 15.600" stroke="#2a5cc8" stroke-width="1.700"/></svg>
<svg width="16" height="14" viewBox="0 0 16 14" style="left:1066px;top:75.5px"><ellipse cx="8.600" cy="7" rx="6.800" ry="6" fill="none" stroke="#d8202a" stroke-width=".9"/><ellipse cx="8.600" cy="7" rx="5" ry="4.400" fill="none" stroke="#e8901e" stroke-width=".9"/><ellipse cx="8.600" cy="7" rx="3.400" ry="3" fill="#f4e43a" stroke="#2faa3a" stroke-width=".9"/><circle cx="8.600" cy="7" r="1.400" fill="#f4f03a" stroke="#d8901e" stroke-width=".6"/><path d="M.4 3.400H4M.2 5.200H3.400M.2 7H3.200M.2 8.800H3.400M.4 10.600H4" stroke="#2a4ac8" stroke-width=".9"/><path d="M13.400 3.400H16M13.800 5.200H16M14 7H16M13.800 8.800H16M13.400 10.600H16" stroke="#2faa3a" stroke-width=".9"/></svg>
<svg width="16" height="16" viewBox="0 0 16 16" style="left:1129px;top:74px"><circle cx="8" cy="8" r="7" fill="#f6cf2a" stroke="#3a3010" stroke-width="1.2"/><path d="M3.800 8.400L6.800 11.400L12.600 4.600" fill="none" stroke="#111" stroke-width="2.200"/></svg>
<svg width="15" height="16" viewBox="0 0 15 16" style="left:1214.5px;top:74px"><rect x=".6" y=".2" width="10.800" height="10.400" fill="#24389a"/><rect x="3.600" y="5.200" width="11.200" height="10.800" fill="#cf2030"/></svg>
<svg width="17" height="15" viewBox="0 0 17 15" style="left:1290.5px;top:75px"><g stroke="#9a6a00" stroke-width=".7"><ellipse cx="10.600" cy="9" rx="5.200" ry="2.400" fill="#e8a81a"/><ellipse cx="10.600" cy="6.800" rx="5.200" ry="2.400" fill="#f1b82a"/><ellipse cx="10.600" cy="4.600" rx="5.200" ry="2.400" fill="#f6c83a"/><ellipse cx="10.600" cy="2.800" rx="5.200" ry="2.400" fill="#fbe06a"/><ellipse cx="6" cy="12.400" rx="5.400" ry="2.400" fill="#e8a81a"/><ellipse cx="6" cy="10.400" rx="5.400" ry="2.400" fill="#f1b82a"/><ellipse cx="6" cy="8.400" rx="5.400" ry="2.400" fill="#fbe06a"/></g></svg>
<svg width="16" height="16" viewBox="0 0 16 16" style="left:1374px;top:74px"><circle cx="8" cy="8" r="7.400" fill="#f6f7fa"/><path d="M8 .8A7.200 7.200 0 0 0 .8 7.600L5 7.600A3.400 3.400 0 0 1 8 4.600Z" fill="#2a3a9a" transform="rotate(20 8 8)"/><path d="M9 .9A7.200 7.200 0 0 1 15.200 8L11.400 8A3.400 3.400 0 0 0 9 4.800Z" fill="#8ad0f0" transform="rotate(15 8 8)"/><path d="M15.200 9A7.200 7.200 0 0 1 8.400 15.200L8.400 11.400A3.400 3.400 0 0 0 11.400 9Z" fill="#f1923a" transform="rotate(10 8 8)"/><path d="M7.400 15.200A7.200 7.200 0 0 1 .8 8.800L4.600 8.800A3.400 3.400 0 0 0 7.400 11.400Z" fill="#f4e05a" transform="rotate(10 8 8)"/><circle cx="8" cy="8" r="3" fill="#f6f7fa"/></svg>
<svg width="16" height="16" viewBox="0 0 16 16" style="left:1458px;top:74px"><path d="M1 6L5 3.600L8 5L6.400 6.800L9.400 8.400L11.600 6.400L13.200 7.600V11.600L8.400 15.200L1 9.600Z" fill="#f1c832" stroke="#7a5a00" stroke-width=".9"/><path d="M1 6L8.400 11.400L13.200 7.600M8.400 11.400V15.200" fill="none" stroke="#7a5a00" stroke-width=".8"/><path d="M11 .8L15.600 4L11 7.200Z" fill="#d8f0c8" stroke="#2faa3a" stroke-width="1"/></svg>
<svg width="17" height="17" viewBox="0 0 17 17" style="left:338px;top:65px"><defs><linearGradient id="gck73" x1="0" y1="0" x2="1" y2="1"><stop offset="0" stop-color="#fff8c0"/><stop offset=".5" stop-color="#fbd960"/><stop offset="1" stop-color="#f2a420"/></linearGradient></defs><rect x=".7" y=".7" width="13" height="13" rx=".8" fill="#f8dc78" stroke="#c8920e"/><rect x="2.800" y="2.800" width="13" height="13" rx=".8" fill="url(#gck73)" stroke="#b47e08"/><path d="M5.600 8.800L8.400 12L13 5.800" fill="none" stroke="#1a2f9a" stroke-width="1.900"/></svg>
<svg width="17" height="17" viewBox="0 0 17 17" style="left:338px;top:88px"><defs><linearGradient id="gck96" x1="0" y1="0" x2="1" y2="1"><stop offset="0" stop-color="#fff8c0"/><stop offset=".5" stop-color="#fbd960"/><stop offset="1" stop-color="#f2a420"/></linearGradient></defs><rect x=".7" y=".7" width="13" height="13" rx=".8" fill="#f8dc78" stroke="#c8920e"/><rect x="2.800" y="2.800" width="13" height="13" rx=".8" fill="url(#gck96)" stroke="#b47e08"/><path d="M5.600 8.800L8.400 12L13 5.800" fill="none" stroke="#d0181e" stroke-width="1.900"/></svg>
<svg width="17" height="17" viewBox="0 0 17 17" style="left:338px;top:111px"><rect x=".7" y=".7" width="13" height="13" rx="1" fill="#e4e5e9" stroke="#bbbcc1"/><rect x="2.800" y="2.800" width="13" height="13" rx="1" fill="#eceded" stroke="#b0b1b6"/><rect x="5.400" y="5.400" width="7.800" height="7.800" fill="#f8f8f9" stroke="#a9aaaf" stroke-width=".9"/><path d="M9.300 6.900V11.700M6.900 9.300H11.700" stroke="#9a9ba0" stroke-width="1.400"/></svg>
<svg width="16" height="16" viewBox="0 0 16 16" style="left:473px;top:65px"><path d="M1.200 8.400C3 6.600 6 7.400 7 9.600L10 12.400L6.600 15.200L3.600 12.600C1.600 12 .4 10 1.200 8.400Z" fill="#f4b84a" stroke="#b87a10" stroke-width=".8"/><path d="M9 8C11 7 13.600 8.600 15.200 12.400L12.400 11.800L10.400 13Z" fill="#f4b84a" stroke="#b87a10" stroke-width=".7"/><path d="M2.400 1.600L12.600 9.600M12.600 1.600L5 9.400" stroke="#1a35c0" stroke-width="1.500"/><path d="M.8 .6H5L.8 4.600ZM14.200 .6H10L14.200 4.600Z" fill="#1a35c0"/></svg>
<svg width="16" height="16" viewBox="0 0 16 16" style="left:473px;top:88px"><defs><clipPath id="cpz"><rect width="16" height="16"/></clipPath></defs><rect width="16" height="16" fill="#fff"/><g clip-path="url(#cpz)" fill="none" stroke="#000" stroke-width="2.700"><path d="M-1 -1.500C4 -2.500 7 4.500 11 4.500C14 4.500 15 2.500 17 2"/><path d="M-1 3.800C4 2.800 7 9.800 11 9.800C14 9.800 15 7.800 17 7.300"/><path d="M-1 9.100C4 8.100 7 15.100 11 15.100C14 15.100 15 13.100 17 12.600"/><path d="M-1 14.400C4 13.400 7 20.400 11 20.400"/></g></svg>
<svg width="16" height="16" viewBox="0 0 16 16" style="left:473px;top:111px"><defs><linearGradient id="gcv1" x1="0" y1="0" x2="1" y2="1"><stop offset="0" stop-color="#2ad8e8"/><stop offset=".25" stop-color="#2aa0f0"/><stop offset=".45" stop-color="#3a2ae0"/><stop offset=".62" stop-color="#c020d0"/><stop offset=".8" stop-color="#f0106a"/><stop offset="1" stop-color="#e81010"/></linearGradient><radialGradient id="gcv2" cx="1" cy="0" r=".8"><stop offset="0" stop-color="#f4f43a"/><stop offset=".5" stop-color="#3ae83a"/><stop offset="1" stop-color="#3ae83a" stop-opacity="0"/></radialGradient></defs><rect width="16" height="16" fill="url(#gcv1)"/><rect width="16" height="16" fill="url(#gcv2)"/><path d="M0 12C4 10 8 15 16 14V16H0Z" fill="#c01010"/></svg>
<svg width="16" height="16" viewBox="0 0 16 16" style="left:601px;top:65px"><path d="M1 1.200L9 .6L15 4V10L9.600 15H2L1 9Z" fill="#3ac83a" stroke="#1a7a1a" stroke-width=".9"/><path d="M1 1.200L7.600 5.600L15 4M7.600 5.600L9.600 15" fill="none" stroke="#1a7a1a" stroke-width=".7"/><rect x="10" y="9.600" width="5.600" height="5.600" fill="#f4d43a" stroke="#a88a10" stroke-width=".8"/><circle cx="5.400" cy="9" r="3" fill="#e4f0f8" fill-opacity=".9" stroke="#7a8a9a" stroke-width=".9"/><path d="M3.400 11.400L.6 14.600" stroke="#2a5cc8" stroke-width="1.800"/></svg>
<svg width="16" height="16" viewBox="0 0 16 16" style="left:601px;top:88px"><path d="M1.600 6L5 1.200H11.600L15 5V12.400H11V7H5.600V9.600H1.600Z" fill="#f4d43a" stroke="#a88a10" stroke-width=".9"/><path d="M7.600 7.600H14.400V11H7.600Z" fill="#3ac83a" stroke="#1a7a1a" stroke-width=".8"/><circle cx="5.400" cy="9" r="3" fill="#e4f0f8" fill-opacity=".9" stroke="#7a8a9a" stroke-width=".9"/><path d="M3.400 11.400L.6 14.600" stroke="#2a5cc8" stroke-width="1.800"/></svg>
<svg width="16" height="16" viewBox="0 0 16 16" style="left:601px;top:111px"><path d="M4.600 .8H11.400L15.200 5V10.800L11.400 15H4.600L1.600 10.800V5Z" fill="#f4d43a" stroke="#a88a10" stroke-width=".9"/><path d="M.6 8H12.600" stroke="#2faa3a" stroke-width="2.200"/><path d="M11.800 5L15.800 8L11.800 11Z" fill="#2faa3a"/><circle cx="8.600" cy="8" r="2.400" fill="#f9eea0" stroke="#a88a10" stroke-width=".7"/><circle cx="5.400" cy="9" r="3" fill="#e4f0f8" fill-opacity=".9" stroke="#7a8a9a" stroke-width=".9"/><path d="M3.400 11.400L.6 14.600" stroke="#2a5cc8" stroke-width="1.800"/></svg>
<svg width="16" height="16" viewBox="0 0 16 16" style="left:741px;top:65px"><path d="M8 .8C4.800 2.800 5.200 8 1.200 11.400C1.200 14 14.800 14 14.800 11.400C10.800 8 11.200 2.800 8 .8Z" fill="#f4c832" stroke="#8a6a00" stroke-width=".9"/><ellipse cx="8" cy="11.600" rx="6.800" ry="1.800" fill="#e8a81a" stroke="#8a6a00" stroke-width=".6"/><path d="M8 0V16" stroke="#222" stroke-width=".9" stroke-dasharray="2 1.200"/></svg>
<svg width="16" height="16" viewBox="0 0 16 16" style="left:741px;top:88px"><path d="M.6 5.200C4 5.200 5 6.600 8 6.600C11 6.600 12 5.200 15.400 5.200V10.800C12 10.800 11 9.400 8 9.400C5 9.400 4 10.800 .6 10.800Z" fill="#f4d43a" stroke="#b89a10" stroke-width=".7"/><path d="M8 .4V4M8 15.600V12" stroke="#d8202a" stroke-width="1.400"/><path d="M5.800 3L8 5.800L10.200 3ZM5.800 13L8 10.200L10.200 13Z" fill="#d8202a"/><path d="M6 1.200H10M6 14.800H10" stroke="#d8202a" stroke-width="1"/></svg>
<svg width="16" height="16" viewBox="0 0 16 16" style="left:741px;top:111px"><path d="M1 1H8L10.400 3.400V12H1Z" fill="#fbfbfd" stroke="#7d8088" stroke-width=".9"/><path d="M6 4.600H12.600L15 7V15.400H6Z" fill="#eef2fa" stroke="#7d8088" stroke-width=".9"/><path d="M2.200 3.600H7.400M2.200 6.200H6.400" stroke="#d8202a" stroke-width="1.500"/><path d="M4.600 2V8" stroke="#d8202a" stroke-width="1"/><path d="M9 9.400C9 7.200 12.600 7.200 12.600 9.400C12.600 10.800 10.800 10.800 10.800 12.400" fill="none" stroke="#1f55c8" stroke-width="1.500"/><circle cx="10.800" cy="14.200" r=".9" fill="#1f55c8"/></svg>
<svg width="16" height="16" viewBox="0 0 16 16" style="left:6px;top:168px"><path d="M.5 3.400L4.800 .9L8.500 .4L11.600 1.600L12.600 6.500L15.500 9.600V12.300L10.200 15.300L.8 6.600Z" fill="#f2cc1a" stroke="#141003" stroke-width="1.350" stroke-linejoin="round"/><path d="M4.800 1.200L8.400 .8L11.200 2L8.200 3.600Z" fill="#fbe97a"/><path d="M1.400 3.600L4.600 2L5.400 5.800L10.200 11.600Z" fill="#fbe45a"/><path d="M.5 3.400L10.200 12.300L15.500 9.600M10.200 12.300V15.300" fill="none" stroke="#141003" stroke-width="1.150"/><path d="M4.800 .9L5.500 5.700L9 8.800L12.600 6.500M5.500 5.700L8.300 4.200L8.200 3.600M9 8.800L8.300 4.200" fill="none" stroke="#141003" stroke-width=".9"/><path d="M10.900 13.300L14.800 11V11.900L10.900 14.300Z" fill="#c89a08"/></svg>
<svg width="17" height="17" viewBox="0 0 16 16" style="left:34px;top:167.5px"><rect x="2" y="5" width="11.500" height="10" fill="#f4f6fa" stroke="#5a5c64"/><path d="M4 8H7M4 11H7M8.400 8H12M8.400 11H12" stroke="#6a7aa0" stroke-width="1.1"/><path d="M5.600 5L9.200 1.400L15 2.600V5.400L11.600 6.600L9 4.600Z" fill="#f4c98c" stroke="#9a6a2c" stroke-width=".8"/></svg>
<svg width="17" height="17" viewBox="0 0 16 16" style="left:62px;top:167.5px"><path d="M3 1V13H8M3 5.400H8" fill="none" stroke="#222" stroke-width="1.1"/><rect x="7.600" y="2.400" width="5.600" height="5.600" rx="1.200" fill="#f1c40f" stroke="#3a2c00"/><rect x="9.600" y="9.600" width="5.600" height="5.600" rx="1.200" fill="#f1c40f" stroke="#3a2c00"/><path d="M1 1H5" stroke="#222" stroke-width="1.1"/></svg>
<svg width="17" height="17" viewBox="0 0 16 16" style="left:89.5px;top:167.5px"><circle cx="8" cy="8" r="4.600" fill="none" stroke="#b85ad8" stroke-width="1.500"/><path d="M8 1V15M1 8H15" stroke="#b85ad8" stroke-width="1.300" stroke-dasharray="4.400 1.200 2.800 1.200 4.400 0"/><circle cx="8" cy="8" r="1.200" fill="#b85ad8"/></svg>
<svg width="17" height="17" viewBox="0 0 16 16" style="left:117.5px;top:167px"><defs><clipPath id="cpb"><circle cx="8" cy="8" r="7.200"/></clipPath></defs><g clip-path="url(#cpb)"><rect width="16" height="16" fill="#f1c40f"/><path d="M8 8L0 2V16H5Z" fill="#2a5cd8"/><path d="M8 8L5 16H-2Z" fill="#2fb83a"/><path d="M8 8L0 2V-2H18V6Z" fill="#e8281e"/><path d="M8 8L18 6V16H14Z" fill="#f1c40f"/><ellipse cx="11.600" cy="4.600" rx="2.600" ry="3.400" fill="#2a1a10" transform="rotate(-25 11.600 4.600)"/><ellipse cx="5.600" cy="4" rx="2.200" ry="1.400" fill="#fff" fill-opacity=".6"/></g><circle cx="8" cy="8" r="7.200" fill="none" stroke="#5a3a10" stroke-width=".6"/></svg>
<svg width="10" height="9" viewBox="0 0 10 9" style="left:173px;top:171px"><path d="M1 .8L4.400 4.400L1 8M5.400 .8L8.800 4.400L5.400 8" fill="none" stroke="#222" stroke-width="1.500"/></svg>
<svg width="12" height="12" viewBox="0 0 12 12" style="left:8.5px;top:191px"><path d="M1.200 1.200H10.800L7.400 5.600V10.600H4.800V5.600Z" fill="#bfe0ff" stroke="#1a55d8" stroke-width="1.500" stroke-linejoin="round"/></svg>
<div style="left:10px;top:227px;width:1px;height:203px;background:repeating-linear-gradient(180deg,#8a8c94 0 1px,rgba(0,0,0,0) 1px 2px)"></div>
<svg width="16" height="16" viewBox="0 0 16 16" style="left:2.5px;top:210px"><path d="M.5 3.400L4.800 .9L8.500 .4L11.600 1.600L12.600 6.500L15.500 9.600V12.300L10.200 15.300L.8 6.600Z" fill="#f2cc1a" stroke="#141003" stroke-width="1.350" stroke-linejoin="round"/><path d="M4.800 1.200L8.400 .8L11.200 2L8.200 3.600Z" fill="#fbe97a"/><path d="M1.400 3.600L4.600 2L5.400 5.800L10.200 11.600Z" fill="#fbe45a"/><path d="M.5 3.400L10.200 12.300L15.500 9.600M10.200 12.300V15.300" fill="none" stroke="#141003" stroke-width="1.150"/><path d="M4.800 .9L5.500 5.700L9 8.800L12.600 6.500M5.500 5.700L8.300 4.200L8.200 3.600M9 8.800L8.300 4.200" fill="none" stroke="#141003" stroke-width=".9"/><path d="M10.900 13.300L14.800 11V11.900L10.900 14.300Z" fill="#c89a08"/></svg>
<div style="left:6px;top:233px;width:9px;height:9px;box-sizing:border-box;background:#fdfdfe;border:1px solid #8f9199;border-radius:1px"></div>
<div style="left:8px;top:237px;width:5px;height:1px;background:#2a3a6a"></div><div style="left:10px;top:235px;width:1px;height:5px;background:#2a3a6a"></div>
<div style="left:15px;top:237px;width:5px;height:1px;background:repeating-linear-gradient(90deg,#8a8c94 0 1px,rgba(0,0,0,0) 1px 2px)"></div>
<div style="left:11px;top:255px;width:9px;height:1px;background:repeating-linear-gradient(90deg,#8a8c94 0 1px,rgba(0,0,0,0) 1px 2px)"></div>
<div style="left:6px;top:269px;width:9px;height:9px;box-sizing:border-box;background:#fdfdfe;border:1px solid #8f9199;border-radius:1px"></div>
<div style="left:8px;top:273px;width:5px;height:1px;background:#2a3a6a"></div><div style="left:10px;top:271px;width:1px;height:5px;background:#2a3a6a"></div>
<div style="left:15px;top:273px;width:5px;height:1px;background:repeating-linear-gradient(90deg,#8a8c94 0 1px,rgba(0,0,0,0) 1px 2px)"></div>
<div style="left:6px;top:287px;width:9px;height:9px;box-sizing:border-box;background:#fdfdfe;border:1px solid #8f9199;border-radius:1px"></div>
<div style="left:8px;top:291px;width:5px;height:1px;background:#2a3a6a"></div><div style="left:10px;top:289px;width:1px;height:5px;background:#2a3a6a"></div>
<div style="left:15px;top:291px;width:5px;height:1px;background:repeating-linear-gradient(90deg,#8a8c94 0 1px,rgba(0,0,0,0) 1px 2px)"></div>
<div style="left:6px;top:305px;width:9px;height:9px;box-sizing:border-box;background:#fdfdfe;border:1px solid #8f9199;border-radius:1px"></div>
<div style="left:8px;top:309px;width:5px;height:1px;background:#2a3a6a"></div><div style="left:10px;top:307px;width:1px;height:5px;background:#2a3a6a"></div>
<div style="left:15px;top:309px;width:5px;height:1px;background:repeating-linear-gradient(90deg,#8a8c94 0 1px,rgba(0,0,0,0) 1px 2px)"></div>
<div style="left:11px;top:327px;width:9px;height:1px;background:repeating-linear-gradient(90deg,#8a8c94 0 1px,rgba(0,0,0,0) 1px 2px)"></div>
<div style="left:11px;top:345px;width:9px;height:1px;background:repeating-linear-gradient(90deg,#8a8c94 0 1px,rgba(0,0,0,0) 1px 2px)"></div>
<div style="left:11px;top:363px;width:9px;height:1px;background:repeating-linear-gradient(90deg,#8a8c94 0 1px,rgba(0,0,0,0) 1px 2px)"></div>
<div style="left:11px;top:381px;width:9px;height:1px;background:repeating-linear-gradient(90deg,#8a8c94 0 1px,rgba(0,0,0,0) 1px 2px)"></div>
<div style="left:11px;top:399px;width:9px;height:1px;background:repeating-linear-gradient(90deg,#8a8c94 0 1px,rgba(0,0,0,0) 1px 2px)"></div>
<div style="left:11px;top:417px;width:9px;height:1px;background:repeating-linear-gradient(90deg,#8a8c94 0 1px,rgba(0,0,0,0) 1px 2px)"></div>
<div style="left:6px;top:431px;width:9px;height:9px;box-sizing:border-box;background:#fdfdfe;border:1px solid #8f9199;border-radius:1px"></div>
<div style="left:8px;top:435px;width:5px;height:1px;background:#2a3a6a"></div><div style="left:10px;top:433px;width:1px;height:5px;background:#2a3a6a"></div>
<div style="left:15px;top:435px;width:5px;height:1px;background:repeating-linear-gradient(90deg,#8a8c94 0 1px,rgba(0,0,0,0) 1px 2px)"></div>
<svg width="16" height="16" viewBox="0 0 16 16" style="left:21px;top:228.5px"><path d="M.8 3.400V14.200H15.200V4.400H8L6.600 2.200H2Z" fill="#f6cf45" stroke="#a87a10" stroke-width=".9"/><path d="M1.400 5.400H14.600V13.600H1.400Z" fill="#fbe07a"/><path d="M.8 14.200H15.200" stroke="#a87a10" stroke-width="1.200"/><circle cx="8.400" cy="9" r="4" fill="#fdfdfe" stroke="#3a4ac8" stroke-width="1.300"/><path d="M8.400 6.600V9.200H10.400" fill="none" stroke="#d8202a" stroke-width="1"/><path d="M3 4.800C4 2.600 6 2 8 2.400" fill="none" stroke="#2a9a3a" stroke-width="1.400"/><path d="M1.600 3.200L2.600 6.400L5.200 4.400Z" fill="#2a9a3a"/></svg>
<svg width="16" height="16" viewBox="0 0 16 16" style="left:21px;top:246.5px"><path d="M.8 3.400V14.200H15.200V4.400H8L6.600 2.200H2Z" fill="#f6cf45" stroke="#a87a10" stroke-width=".9"/><path d="M1.400 5.400H14.600V13.600H1.400Z" fill="#fbe07a"/><path d="M.8 14.200H15.200" stroke="#a87a10" stroke-width="1.200"/><circle cx="8.400" cy="9" r="3.800" fill="#fdfdfe" stroke="#3a3c48" stroke-width="1.100"/><path d="M6.400 11L10.400 7" stroke="#1f55c8" stroke-width="1.300"/></svg>
<svg width="17" height="17" viewBox="0 0 16.400 16.400" style="left:20.5px;top:264.5px"><path d="M1 8.600V10.800L8 16L15.400 9.600V7.400L8 13.800Z" fill="#fdfdfd" stroke="#3a3c40" stroke-width=".9"/><path d="M1 8.600L8 1L15.400 7.400L8 14.200Z" fill="#f8d84a" stroke="#5a4a10" stroke-width="1"/><path d="M3.600 8.200L8 3.400L10.400 5.400" fill="none" stroke="#fdf2a8" stroke-width="1.600"/></svg>
<svg width="16" height="16" viewBox="0 0 16 16" style="left:21px;top:282.5px"><path d="M.8 3.400V14.200H15.200V4.400H8L6.600 2.200H2Z" fill="#f6cf45" stroke="#a87a10" stroke-width=".9"/><path d="M1.400 5.400H14.600V13.600H1.400Z" fill="#fbe07a"/><path d="M.8 14.200H15.200" stroke="#a87a10" stroke-width="1.200"/><text x="8.200" y="13" font-family="Liberation Serif,serif" font-weight="bold" font-size="11" text-anchor="middle" fill="#1a2a9a">A</text></svg>
<svg width="16" height="16" viewBox="0 0 16 16" style="left:21px;top:300.5px"><path d="M.8 3.400V14.200H15.200V4.400H8L6.600 2.200H2Z" fill="#f6cf45" stroke="#a87a10" stroke-width=".9"/><path d="M1.400 5.400H14.600V13.600H1.400Z" fill="#fbe07a"/><path d="M.8 14.200H15.200" stroke="#a87a10" stroke-width="1.200"/><rect x="4.400" y="5.800" width="5.600" height="5.600" rx="1" fill="none" stroke="#222" stroke-width="1.200"/><rect x="6.400" y="7.400" width="5.600" height="5.600" rx="1" fill="#f6cf45" stroke="#222" stroke-width="1.200"/></svg>
<svg width="16" height="16" viewBox="0 0 16 16" style="left:21px;top:318.5px"><path d="M.8 3.400V14.200H15.200V4.400H8L6.600 2.200H2Z" fill="#f6cf45" stroke="#a87a10" stroke-width=".9"/><path d="M1.400 5.400H14.600V13.600H1.400Z" fill="#fbe07a"/><path d="M.8 14.200H15.200" stroke="#a87a10" stroke-width="1.200"/><text x="8.200" y="13" font-family="Liberation Sans,sans-serif" font-weight="bold" font-size="10.500" text-anchor="middle" fill="#1a2a9a">Σ</text></svg>
<svg width="16" height="16" viewBox="0 0 16 16" style="left:21px;top:337px"><circle cx="3" cy="2.800" r="2.300" fill="#e8202a"/><circle cx="3" cy="8" r="2.300" fill="#2a3ad8"/><circle cx="3" cy="13.200" r="2.300" fill="#2fb83a"/><circle cx="2.400" cy="2.200" r=".8" fill="#fff" fill-opacity=".7"/><circle cx="2.400" cy="12.600" r=".8" fill="#fff" fill-opacity=".7"/><path d="M7 3.200H15M7 8.200H15M7 13.200H15" stroke="#222" stroke-width="1.800"/></svg>
<svg width="16" height="16" viewBox="0 0 16 16" style="left:20.5px;top:354.5px"><path d="M8 1.600L15 8L8 14.400L1 8Z" fill="none" stroke="#222" stroke-width="1"/><path d="M.6 .6L3.200 3.200M12.800 12.800L15.600 15.600" stroke="#222" stroke-width="1"/><path d="M5 7L9 11M7 5L11 9" stroke="#222" stroke-width=".9"/></svg>
<svg width="16" height="16" viewBox="0 0 16 16" style="left:20.5px;top:372.5px"><path d="M8 1.600L15 8L8 14.400L1 8Z" fill="none" stroke="#222" stroke-width="1"/><path d="M.6 .6L3.200 3.200M12.800 12.800L15.600 15.600" stroke="#222" stroke-width="1"/><path d="M5 7L9 11M7 5L11 9" stroke="#222" stroke-width=".9"/></svg>
<svg width="16" height="16" viewBox="0 0 16 16" style="left:20.5px;top:390.5px"><path d="M8 1.600L15 8L8 14.400L1 8Z" fill="none" stroke="#222" stroke-width="1"/><path d="M.6 .6L3.200 3.200M12.800 12.800L15.600 15.600" stroke="#222" stroke-width="1"/><path d="M5 7L9 11M7 5L11 9" stroke="#222" stroke-width=".9"/></svg>
<svg width="16" height="16" viewBox="0 0 16 16" style="left:21px;top:409px"><path d="M4 14V2.400M2 12H13" stroke="#a8181e" stroke-width="1.200"/><path d="M1.800 4.200L4 .6L6.200 4.200ZM11.400 9.800L15 12L11.400 14.200Z" fill="#a8181e"/><path d="M2 10L6 14M6 10L2 14M4 9.600V14.400" stroke="#222" stroke-width=".8"/></svg>
<svg width="16" height="16" viewBox="0 0 16 16" style="left:21px;top:426.5px"><path d="M1 3L3.600 .8H11.400L12.600 2.600V12.400L10.400 14.400H2.600L1 12.400Z" fill="#f4c832" stroke="#2a2200" stroke-width="1.100"/><rect x="3.600" y="3" width="9" height="9.800" rx="1.200" fill="#fbe07a" stroke="#2a2200" stroke-width="1"/><path d="M6.600 6.600H12.400V9.600L9.600 12.400H6.600Z" fill="#2fa83a" stroke="#1a5a1a" stroke-width=".7"/><rect x="10" y="10.400" width="5.600" height="5.200" fill="#3ad84a" stroke="#1a7a1a" stroke-width=".8"/></svg>
<div style="left:17px;top:1006px;width:1px;height:15px;background:#cfd0d3"></div>
<div style="left:33px;top:1006px;width:1px;height:15px;background:#cfd0d3"></div>
<div style="left:49px;top:1006px;width:1px;height:15px;background:#cfd0d3"></div>
<svg width="66" height="14" viewBox="0 0 66 14" style="left:2px;top:1006.500px"><g fill="#8e8f95"><path d="M4 2.400H5.600V11.600H4ZM11.400 2.400V11.600L6 7ZM27 2.400V11.600L21 7ZM37.600 2.400V11.600L43.600 7ZM52.400 2.400V11.600L57.800 7ZM58.200 2.400H59.800V11.600H58.200Z"/></g></svg>
<svg width="110" height="14" viewBox="0 0 110 14" style="left:1482px;top:143.500px"><g fill="#fbfbfd" stroke="#7c7d85" stroke-width="1.100">
<rect x="1.600" y="1" width="11.600" height="11.600"/><rect x="24.600" y="1" width="11.600" height="11.600"/>
<rect x="47.600" y="9" width="11" height="3.600"/>
<rect x="73" y="1" width="10.600" height="7.600"/><rect x="68.400" y="5" width="10.600" height="7.600"/><rect x="70.600" y="7.800" width="6.200" height="3"/>
<path d="M94 2H97L100 5.600L103 2H106L101.600 7.200L106 12.400H103L100 8.800L97 12.400H94L98.400 7.200Z"/></g>
<g fill="#7c7d85"><rect x="8.400" y="4" width="1.800" height="5.600" fill="#fbfbfd" stroke="#7c7d85" stroke-width=".9"/><path d="M7 3.600V10L3.400 6.800Z"/>
<rect x="27.600" y="4" width="1.800" height="5.600" fill="#fbfbfd" stroke="#7c7d85" stroke-width=".9"/><path d="M30.800 3.600V10L34.400 6.800Z"/></g></svg>
<svg width="16" height="16" viewBox="0 0 16 16" style="left:1581px;top:200.5px"><path d="M11.400 1.800H13.400V6H11.400Z" fill="#d8502a" stroke="#8a2a10" stroke-width=".6"/><path d="M1 8.600L8 1.800L15 8.600" fill="none" stroke="#e8a81a" stroke-width="2.200" stroke-linejoin="miter"/><path d="M3 8V14.600H13V8L8 3.600Z" fill="#fdf6c8" stroke="#c8981a" stroke-width=".7"/><rect x="6.600" y="9" width="3" height="5.600" fill="#f1c40f" stroke="#a87a10" stroke-width=".6"/></svg>
<svg width="17" height="17" viewBox="0 0 16.400 16.400" style="left:1580px;top:224px"><path d="M1 7L3.400 5.600L6 7V14.600L3.400 16L1 14.600Z" fill="#2fb83a" stroke="#1a6a1a" stroke-width=".7"/><path d="M5.600 5L8.200 2.600L10.800 5V15H5.600Z" fill="#f1c832" stroke="#8a6a00" stroke-width=".7"/><path d="M10.400 3L12.800 .6L15.400 3V15.400H10.400Z" fill="#3a6ad8" stroke="#1a3a8a" stroke-width=".7"/><path d="M12 3V15" stroke="#9ab8f0" stroke-width="1.200"/><path d="M2.400 8V14" stroke="#8ae88a" stroke-width="1"/></svg>
<svg width="17" height="16" viewBox="0 0 16.600 16" style="left:1580.5px;top:248.5px"><path d="M1 3.400H6L7.400 5H13V13.600H1Z" fill="#e8b02a" stroke="#a8780a" stroke-width=".9"/><path d="M1 13.600L3.600 7H15.600L12.800 13.600Z" fill="#fbe07a" stroke="#a8780a" stroke-width=".9"/></svg>
<svg width="16" height="17" viewBox="0 0 16 17" style="left:1581px;top:272px"><rect x="1.400" y="1" width="13.600" height="9.600" fill="#f2f4fa" stroke="#5a6a9a" stroke-width=".8"/><rect x="2.600" y="2.400" width="5" height="2.400" fill="#f1c832"/><rect x="9" y="2.400" width="4.600" height="2.400" fill="#3a5ac8"/><path d="M2.600 8.800L5.200 6.400L7.800 8.800Z" fill="#f1c832"/><rect x="9" y="6.400" width="4.600" height="2.400" fill="#3a5ac8"/><path d="M1.400 13.400H6.400" stroke="#1a2ab8" stroke-width="1.700"/><path d="M5.400 10.800L8.800 13.400L5.400 16Z" fill="#1a2ab8"/></svg>
<svg width="16" height="16" viewBox="0 0 16 16" style="left:1581px;top:296px"><defs><clipPath id="cpa"><circle cx="8" cy="7.600" r="7"/></clipPath><radialGradient id="gsh" cx=".35" cy=".3" r=".8"><stop offset="0" stop-color="#fff" stop-opacity=".55"/><stop offset=".5" stop-color="#fff" stop-opacity="0"/><stop offset="1" stop-color="#000" stop-opacity=".25"/></radialGradient></defs><ellipse cx="8" cy="14.600" rx="6" ry="1.400" fill="#3a3a3a" fill-opacity=".45"/><g clip-path="url(#cpa)"><rect width="16" height="16" fill="#e8281e"/><path d="M8 7.600L-2 4V-2H9Z" fill="#2a6ad8"/><path d="M8 7.600L-2 4V18H5Z" fill="#2fb83a"/><path d="M8 7.600L5 18H18V10Z" fill="#f1c40f"/><rect width="16" height="16" fill="url(#gsh)"/></g></svg>
<svg width="16" height="16" viewBox="0 0 16 16" style="left:1581px;top:320.5px"><rect x="2" y="5.600" width="11" height="9.800" fill="#f6f6f8" stroke="#6a6c74" stroke-width=".9"/><path d="M4 9H11M4 11H11M4 13H11" stroke="#a5a7ae" stroke-width=".9"/><path d="M4.600 6.600L9 2L15.400 2.800V5.600L12 7.400L9 5.400L6.600 7.600Z" fill="#f4c98c" stroke="#8a5a1c" stroke-width=".8"/></svg>
<svg width="16" height="16" viewBox="0 0 16 16" style="left:968px;top:395px"><path d="M10 10L14.200 14.200" stroke="#6f9be2" stroke-width="2.600" stroke-linecap="round"/><path d="M10.400 10.400L14 14" stroke="#c4d8f6" stroke-width=".9" stroke-linecap="round"/><circle cx="6.400" cy="6.400" r="5" fill="#d9dade" stroke="#8e9097" stroke-width="1.400"/><circle cx="6.400" cy="6.400" r="3.300" fill="#e9eaed"/><path d="M4 5V4H5M7.800 4H8.800V5M8.800 7.800V8.800H7.800M5 8.800H4V7.800" fill="none" stroke="#555" stroke-width="1"/></svg>
<svg width="16" height="16" viewBox="0 0 16 16" style="left:990.5px;top:395px"><rect x="1.400" y="1.400" width="9.600" height="9.600" fill="none" stroke="#777" stroke-width=".9" stroke-dasharray="1.500 1.200"/><path d="M10 10L14.200 14.200" stroke="#6f9be2" stroke-width="2.600" stroke-linecap="round"/><path d="M10.400 10.400L14 14" stroke="#c4d8f6" stroke-width=".9" stroke-linecap="round"/><circle cx="6.400" cy="6.400" r="4.400" fill="#d9dade" stroke="#8e9097" stroke-width="1.400"/><circle cx="6.400" cy="6.400" r="3.300" fill="#e9eaed"/></svg>
<svg width="16" height="16" viewBox="0 0 16 16" style="left:1014px;top:395px"><path d="M2 2.600L6 1L13.600 11.400L10.600 14.800Z" fill="#9ad0f0" stroke="#2a6ab8" stroke-width="1"/><ellipse cx="12" cy="13" rx="2.400" ry="1.800" fill="#dff0fb" stroke="#2a6ab8" stroke-width=".9" transform="rotate(-40 12 13)"/><path d="M9.600 3.600H15" stroke="#1a3ab8" stroke-width="1.400"/><path d="M11 1.400L8.400 3.600L11 5.800Z" fill="#1a3ab8"/></svg>
<svg width="16" height="16" viewBox="0 0 16 16" style="left:1037px;top:395px"><path d="M1.600 3.600C1.600 .6 14.400 .6 14.400 3.600V13C14.400 16 1.600 16 1.600 13Z" fill="#4a86d8" stroke="#1a3a8a" stroke-width=".8"/><path d="M4.200 4H7V15H4.200ZM9.400 4H12.200V15H9.400Z" fill="#f1c832" stroke="#7a5a00" stroke-width=".6"/><path d="M4.400 6L6.800 8M4.400 9L6.800 11M4.400 12L6.800 14M9.600 6L12 8M9.600 9L12 11M9.600 12L12 14" stroke="#7a5a00" stroke-width=".6"/><ellipse cx="8" cy="3.600" rx="6.400" ry="2.200" fill="#8ab4f0" stroke="#1a3a8a" stroke-width=".7"/></svg>
<svg width="16" height="16" viewBox="0 0 16 16" style="left:1060px;top:395px"><path d="M1.200 5L5 1.200H14.800V11L11 14.800H1.200Z" fill="#fdfdfe" stroke="#4a4c54" stroke-width=".9"/><path d="M1.200 5H11V14.800Z" fill="none" stroke="#4a4c54" stroke-width=".8"/><rect x="1.200" y="5" width="9.800" height="9.800" fill="#7aaaf0" stroke="#2a4a9a" stroke-width=".8"/><path d="M11 5L14.800 1.200" stroke="#4a4c54" stroke-width=".8"/><path d="M8 2V4.400M13.600 8H11.400" stroke="#d8202a" stroke-width="1.200"/><path d="M6.800 3.200L8 5L9.200 3.200ZM12.600 6.800L11 8L12.600 9.200Z" fill="#d8202a"/></svg>
<div style="left:1083.5px;top:402.5px;width:0;height:0;border:3px solid transparent;border-top:3px solid #5f6065;border-bottom:0"></div>
<svg width="16" height="16" viewBox="0 0 16 16" style="left:1097px;top:395px"><defs><linearGradient id="gds" x1="0" x2="1"><stop offset="0" stop-color="#fdfdfe"/><stop offset=".45" stop-color="#eaf0fa"/><stop offset="1" stop-color="#5a8ae0"/></linearGradient></defs><path d="M1.200 4.600L4.600 1.200H14.800V11.400L11.400 14.800H1.200Z" fill="url(#gds)" stroke="#3a3c48" stroke-width=".9"/><path d="M1.200 4.600H11.400V14.800M11.400 4.600L14.800 1.200" fill="none" stroke="#3a3c48" stroke-width=".8"/><path d="M11.400 4.600L14.800 1.200V11.400L11.400 14.800Z" fill="#5a8ae0" stroke="#3a3c48" stroke-width=".6"/></svg>
<div style="left:1120.5px;top:402.5px;width:0;height:0;border:3px solid transparent;border-top:3px solid #5f6065;border-bottom:0"></div>
<svg width="16" height="16" viewBox="0 0 16 16" style="left:1133px;top:395.5px"><path d="M2 9L3.600 3.600C4 2.600 5.200 2.600 5.600 3.400M9.600 10.400L12.400 5.800C13 5 14.200 5.200 14.600 6" fill="none" stroke="#8a8c94" stroke-width="1.200"/><circle cx="4" cy="10" r="2.900" fill="#eceef2" stroke="#85878f" stroke-width="1.300"/><circle cx="11.400" cy="11.400" r="2.900" fill="#eceef2" stroke="#85878f" stroke-width="1.300"/><path d="M6.800 10.200C7.400 9.400 8.200 9.600 8.600 10.600" fill="none" stroke="#85878f" stroke-width="1.200"/></svg>
<div style="left:1157px;top:402.5px;width:0;height:0;border:3px solid transparent;border-top:3px solid #5f6065;border-bottom:0"></div>
<svg width="16" height="16" viewBox="0 0 16 16" style="left:1171px;top:395px"><defs><clipPath id="cph"><circle cx="8" cy="8" r="7.200"/></clipPath><radialGradient id="gsh2" cx=".35" cy=".3" r=".8"><stop offset="0" stop-color="#fff" stop-opacity=".5"/><stop offset=".5" stop-color="#fff" stop-opacity="0"/><stop offset="1" stop-color="#000" stop-opacity=".2"/></radialGradient></defs><g clip-path="url(#cph)"><rect width="16" height="16" fill="#e8483e"/><path d="M8 8L-2 4V-2H9Z" fill="#3a7ae0"/><path d="M8 8L-2 4V18H5Z" fill="#3ac04a"/><path d="M8 8L5 18H18V10Z" fill="#f4b02a"/><rect width="16" height="16" fill="url(#gsh2)"/></g></svg>
<svg width="16" height="16" viewBox="0 0 16 16" style="left:1194px;top:395px"><defs><clipPath id="cpi"><circle cx="8" cy="6.600" r="5.800"/></clipPath></defs><g clip-path="url(#cpi)"><rect width="16" height="16" fill="#e8483e"/><path d="M8 6.600L-2 3V-2H9Z" fill="#3a7ae0"/><path d="M8 6.600L-2 3V18H5Z" fill="#3ac04a"/><path d="M8 6.600L5 18H18V9Z" fill="#f4b02a"/></g><path d="M.6 15.400L3.600 10.800H12.400L15.400 15.400Z" fill="#e6e6e8" stroke="#333" stroke-width=".7"/><path d="M2 13.200H14M5 10.800L4 15.400M8 10.800V15.400M11 10.800L12 15.400" stroke="#222" stroke-width=".8"/></svg>
<div style="left:1217.5px;top:402.5px;width:0;height:0;border:3px solid transparent;border-top:3px solid #5f6065;border-bottom:0"></div>
<svg width="16" height="16" viewBox="0 0 16 16" style="left:1231px;top:395px"><rect x="1" y="3" width="12.400" height="9" fill="#d9dde4" stroke="#4a4c54" stroke-width="1"/><rect x="2.600" y="4.600" width="9.200" height="5.800" fill="#f4f6fa"/><path d="M3 9.400L5.400 6.600L7.400 8.400L9.600 5.600" fill="none" stroke="#5a7ab8" stroke-width=".8"/><path d="M5 15H10M7.200 12V15" stroke="#4a4c54" stroke-width="1.200"/><path d="M2.400 15.200H12.400" stroke="#4a4c54" stroke-width="1"/><path d="M7.600 3.600L10.800 .8L15.600 1.800V4.200L12.600 5.400L10.400 3.800Z" fill="#f4c98c" stroke="#9a6a2c" stroke-width=".7"/></svg>
<div style="left:1254.5px;top:402.5px;width:0;height:0;border:3px solid transparent;border-top:3px solid #5f6065;border-bottom:0"></div>
<span class="t" id="t0" style="left:149px;top:7px;color:#16161c;letter-spacing:0.066px;">File</span>
<span class="t" id="t1" style="left:183px;top:7px;color:#16161c;letter-spacing:0.258px;">Edit</span>
<span class="t" id="t2" style="left:219px;top:7px;color:#16161c;letter-spacing:0.336px;">View</span>
<span class="t" id="t3" style="left:259.5px;top:7px;color:#16161c;letter-spacing:0.331px;">Insert</span>
<span class="t" id="t4" style="left:304.5px;top:7px;color:#16161c;letter-spacing:0.362px;">Tools</span>
<span class="t" id="t5" style="left:347.5px;top:7px;color:#16161c;letter-spacing:0.511px;">Toolbox</span>
<span class="t" id="t6" style="left:404.5px;top:7px;color:#16161c;letter-spacing:0.491px;">3Dcontrol</span>
<span class="t" id="t7" style="left:472px;top:7px;color:#16161c;letter-spacing:0.896px;">Window</span>
<span class="t" id="t8" style="left:532px;top:7px;color:#16161c;letter-spacing:0.344px;">Help</span>
<span class="t" id="t9" style="left:571.5px;top:7px;color:#16161c;letter-spacing:-0.100px;">IB-CADDY Tools</span>
<span class="t" id="t10" style="left:1259.5px;top:7px;color:#222;letter-spacing:-0.406px;">Part3.SLDPRT *</span>
<span class="t" id="t11" style="left:14.5px;top:82px;letter-spacing:0.125px;">Design</span>
<span class="t" id="t12" style="left:17.5px;top:95px;letter-spacing:0.072px;">Study</span>
<span class="t" id="t13" style="left:63.5px;top:89px;letter-spacing:0.100px;">Measure</span>
<span class="t" id="t14" style="left:130.5px;top:89px;letter-spacing:-0.445px;">Mass</span>
<span class="t" id="t15" style="left:117.5px;top:102px;letter-spacing:0.086px;">Properties</span>
<span class="t" id="t16" style="left:186.5px;top:89px;letter-spacing:0.114px;">Section</span>
<span class="t" id="t17" style="left:179px;top:102px;letter-spacing:0.186px;">Properties</span>
<span class="t" id="t18" style="left:241px;top:89px;letter-spacing:0.023px;">Sensor</span>
<span class="t" id="t19" style="left:286.5px;top:102px;letter-spacing:0.048px;">Statistics</span>
<span class="t" id="t20" style="left:361px;top:66px;letter-spacing:-0.037px;">Check</span>
<span class="t" id="t21" style="left:361px;top:89px;letter-spacing:0.076px;">Geometry Analysis</span>
<span class="t" id="t22" style="left:361px;top:112px;color:#8d8e94;letter-spacing:0.300px;">Import Diagnostics</span>
<span class="t" id="t23" style="left:496.5px;top:66px;letter-spacing:0.179px;">Deviation Analysis</span>
<span class="t" id="t24" style="left:496.5px;top:89px;letter-spacing:-0.002px;">Zebra Stripes</span>
<span class="t" id="t25" style="left:496.5px;top:112px;letter-spacing:0.078px;">Curvature</span>
<span class="t" id="t26" style="left:624.5px;top:66px;letter-spacing:0.125px;">Draft Analysis</span>
<span class="t" id="t27" style="left:624.5px;top:89px;letter-spacing:0.174px;">Undercut Analysis</span>
<span class="t" id="t28" style="left:624.5px;top:112px;letter-spacing:0.089px;">Parting Line Analysis</span>
<span class="t" id="t29" style="left:764.5px;top:66px;letter-spacing:-0.161px;">Symmetry Check</span>
<span class="t" id="t30" style="left:764.5px;top:89px;letter-spacing:-0.052px;">Thickness Analysis</span>
<span class="t" id="t31" style="left:764.5px;top:112px;letter-spacing:0.121px;">Compare Documents</span>
<span class="t" id="t32" style="left:897.5px;top:82px;letter-spacing:-0.138px;">Check</span>
<span class="t" id="t33" style="left:887.5px;top:95px;letter-spacing:-0.102px;">Active D...</span>
<span class="t" id="t34" style="left:952.5px;top:89px;letter-spacing:0.088px;">SimulationXpress</span>
<span class="t" id="t35" style="left:956px;top:102px;letter-spacing:0.117px;">Analysis Wizard</span>
<span class="t" id="t36" style="left:1050.5px;top:89px;letter-spacing:-0.170px;">FloXpress</span>
<span class="t" id="t37" style="left:1054px;top:102px;letter-spacing:-0.059px;">Analysis</span>
<span class="t" id="t38" style="left:1056.5px;top:115px;letter-spacing:0.128px;">Wizard</span>
<span class="t" id="t39" style="left:1109.5px;top:89px;letter-spacing:-0.229px;">DFMXpress</span>
<span class="t" id="t40" style="left:1117px;top:102px;letter-spacing:-0.059px;">Analysis</span>
<span class="t" id="t41" style="left:1119.5px;top:115px;letter-spacing:0.128px;">Wizard</span>
<span class="t" id="t42" style="left:1176px;top:89px;letter-spacing:0.070px;">DriveWorksXpress</span>
<span class="t" id="t43" style="left:1204.5px;top:102px;letter-spacing:0.128px;">Wizard</span>
<span class="t" id="t44" style="left:1281px;top:89px;letter-spacing:0.315px;">Costing</span>
<span class="t" id="t45" style="left:1347.5px;top:89px;letter-spacing:0.262px;">Sustainability</span>
<span class="t" id="t46" style="left:1456.5px;top:89px;letter-spacing:-0.297px;">Part</span>
<span class="t" id="t47" style="left:1443.5px;top:102px;letter-spacing:-0.045px;">Reviewer</span>
<span class="t" id="t48" style="left:8.5px;top:137px;letter-spacing:-0.053px;">Features</span>
<span class="t" id="t49" style="left:70px;top:137px;letter-spacing:0.143px;">Sketch</span>
<span class="t" id="t50" style="left:124px;top:137px;letter-spacing:0.254px;">Sheet Metal</span>
<span class="t" id="t51" style="left:202.5px;top:137px;letter-spacing:0.519px;">Weldments</span>
<span class="t" id="t52" style="left:278px;top:137px;letter-spacing:0.363px;">Direct Editing</span>
<span class="t" id="t53" style="left:365px;top:137px;font-weight:bold;letter-spacing:0.219px;">Evaluate</span>
<span class="t" id="t54" style="left:23.5px;top:210.5px;letter-spacing:-0.099px;">Part3</span>
<span class="t" id="t55" style="left:56.8px;top:210.5px;width:130.2px;overflow:hidden;letter-spacing:0.397px;">(Default&lt;&lt;Default&gt;_Display State 1&gt;)</span>
<span class="t" id="t56" style="left:42px;top:228.5px;letter-spacing:0.538px;">History</span>
<span class="t" id="t57" style="left:42px;top:246.5px;letter-spacing:-0.051px;">Sensors</span>
<span class="t" id="t58" style="left:42px;top:264.5px;letter-spacing:0.300px;">Design Binder</span>
<span class="t" id="t59" style="left:42px;top:282.5px;letter-spacing:0.626px;">Annotations</span>
<span class="t" id="t60" style="left:42px;top:300.5px;letter-spacing:0.194px;">Solid Bodies(1)</span>
<span class="t" id="t61" style="left:42px;top:318.5px;letter-spacing:0.285px;">Equations</span>
<span class="t" id="t62" style="left:42px;top:336.5px;letter-spacing:0.488px;">Material &lt;not specified&gt;</span>
<span class="t" id="t63" style="left:42px;top:354.5px;letter-spacing:0.284px;">Front Plane</span>
<span class="t" id="t64" style="left:42px;top:372.5px;letter-spacing:0.451px;">Top Plane</span>
<span class="t" id="t65" style="left:42px;top:390.5px;letter-spacing:0.284px;">Right Plane</span>
<span class="t" id="t66" style="left:42px;top:408.5px;letter-spacing:0.526px;">Origin</span>
<span class="t" id="t67" style="left:42px;top:426.5px;letter-spacing:0.065px;">Boss-Extrude1</span>
<span class="t" id="t68" style="left:80px;top:1004.5px;font-size:12px;font-weight:bold;letter-spacing:-0.134px;">Model</span>
<span class="t" id="t69" style="left:133.5px;top:1004.5px;font-size:12px;letter-spacing:-0.039px;">Motion Study 1</span>
<span class="t" id="t70" style="left:221px;top:364.5px;font-weight:bold;color:#000;">*</span>
<span class="t" id="t71" style="left:227.8px;top:367.5px;font-size:12.5px;font-weight:bold;color:#000;-webkit-text-stroke:0.35px #000;letter-spacing:-0.287px;">Front</span>
<span class="t" id="t72" style="left:667px;top:364.5px;font-weight:bold;color:#000;">*</span>
<span class="t" id="t73" style="left:673.8px;top:367.5px;font-size:12.5px;font-weight:bold;color:#000;-webkit-text-stroke:0.35px #000;letter-spacing:-0.355px;">Left</span>
<span class="t" id="t74" style="left:221px;top:985.5px;font-weight:bold;color:#000;">*</span>
<span class="t" id="t75" style="left:227.8px;top:988.5px;font-size:12.5px;font-weight:bold;color:#000;-webkit-text-stroke:0.35px #000;letter-spacing:-0.161px;">Top</span>
</div>
</body></html>
